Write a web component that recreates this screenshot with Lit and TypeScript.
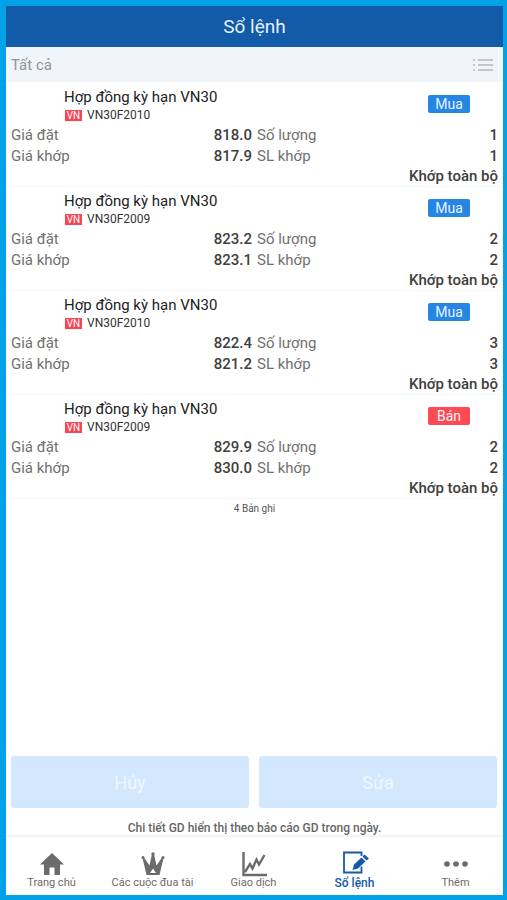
import { LitElement, html, svg, css } from "lit";
import { customElement, property } from "lit/decorators.js";

interface Order {
  code: string;
  side: "Mua" | "Bán";
  price: string;
  matched: string;
  quantity: number;
}

const ORDERS: Order[] = [
  { code: "VN30F2010", side: "Mua", price: "818.0", matched: "817.9", quantity: 1 },
  { code: "VN30F2009", side: "Mua", price: "823.2", matched: "823.1", quantity: 2 },
  { code: "VN30F2010", side: "Mua", price: "822.4", matched: "821.2", quantity: 3 },
  { code: "VN30F2009", side: "Bán", price: "829.9", matched: "830.0", quantity: 2 },
];

const ICONS = {
  home: svg`<path d="M14 3 L26 14.5 H22 V25 H16.5 V17.5 H11.5 V25 H6 V14.5 H2 Z" fill="currentColor"/>`,
  crown: svg`<g fill="currentColor"><circle cx="14" cy="4" r="1.7"/><circle cx="4" cy="7.500" r="1.500"/><circle cx="24" cy="7.500" r="1.500"/><path fill-rule="evenodd" d="M3.500 8 L5 7.500 L10.500 15.500 L13 4 H15 L17.500 15.500 L23 7.500 L24.500 8 L20.500 25 H7.500 Z M14 18.500 L11 23 H17 Z"/></g>`,
  chart: svg`<g fill="none" stroke="currentColor"><path d="M3.500 2 V25 H27" stroke-width="2.400"/><path d="M5 22 L10 14 L12.500 18.500 L16.500 9.500 L19 14.500 L24.500 5" stroke-width="2.400"/></g>`,
  edit: svg`<path d="M20.500 16.500 V22.500 H3 V2.500 H20.500 V6" fill="none" stroke="currentColor" stroke-width="1.800"/><path d="M11.500 20 L13 14.500 L20.500 7.500 L24.500 11.500 L17 18.500 Z M21.500 6.500 L23.500 4.500 L28 8.500 L25.500 10.500 Z" fill="currentColor"/>`,
  more: svg`<g fill="currentColor"><circle cx="5" cy="14" r="2.800"/><circle cx="14" cy="14" r="2.800"/><circle cx="23" cy="14" r="2.800"/></g>`,
};

@customElement("order-row")
class OrderRow extends LitElement {
  @property({ attribute: false }) order!: Order;

  static styles = css`
    :host {
      display: block;
      padding: 4px 5px 0;
      border-bottom: 1px solid #f3f5f7;
    }
    .head {
      display: flex;
      justify-content: space-between;
      height: 38px;
      padding: 0 28px 0 53px;
    }
    .name {
      margin: 0;
      font-size: 15px;
      line-height: 20px;
      font-weight: 400;
      color: #222;
    }
    .code {
      display: flex;
      align-items: center;
      gap: 5px;
      font-size: 12px;
      line-height: 16px;
      padding-left: 1px;
      color: #333;
    }
    .market {
      width: 17px;
      height: 11px;
      background: #fb4352;
      color: #fff;
      font-size: 10px;
      line-height: 11px;
      text-align: center;
    }
    .side {
      width: 42px;
      height: 18px;
      margin-top: 8px;
      border-radius: 2px;
      background: #2586e3;
      color: #e8f3ff;
      font-size: 14px;
      line-height: 18px;
      text-align: center;
    }
    .sell {
      background: #fe4b51;
    }
    .facts {
      display: grid;
      grid-template-columns: 1fr 1fr;
      column-gap: 5px;
      margin: 0;
      font-size: 15px;
      line-height: 21px;
      color: #707070;
    }
    .fact {
      display: flex;
      justify-content: space-between;
    }
    dd {
      margin: 0;
      color: #404040;
      font-weight: 500;
    }
    .status {
      margin: 0;
      font-size: 15px;
      line-height: 19px;
      text-align: right;
      color: #404040;
      font-weight: 500;
    }
  `;

  render() {
    const o = this.order;
    const facts: [string, string | number][] = [
      ["Giá đặt", o.price],
      ["Số lượng", o.quantity],
      ["Giá khớp", o.matched],
      ["SL khớp", o.quantity],
    ];
    return html`
      <div class="head">
        <div>
          <h2 class="name">Hợp đồng kỳ hạn VN30</h2>
          <div class="code"><span class="market">VN</span>${o.code}</div>
        </div>
        <span class="side ${o.side === "Bán" ? "sell" : ""}">${o.side}</span>
      </div>
      <dl class="facts">
        ${facts.map(([k, v]) => html`<div class="fact"><dt>${k}</dt><dd>${v}</dd></div>`)}
      </dl>
      <p class="status">Khớp toàn bộ</p>
    `;
  }
}

@customElement("app-root")
class AppRoot extends LitElement {
  static styles = css`
    :host {
      display: flex;
      flex-direction: column;
      box-sizing: border-box;
      min-height: 100vh;
      border: solid #02a2e9;
      border-width: 6px 4px 5px 6px;
      background: #fff;
      font-family: Roboto, "Liberation Sans", sans-serif;
    }
    .title {
      margin: 0;
      background: #125ba8;
      color: #e6f0fb;
      font-size: 19px;
      font-weight: 400;
      line-height: 41px;
      text-align: center;
    }
    .filter {
      display: flex;
      align-items: center;
      justify-content: space-between;
      height: 35px;
      padding: 0 10px 0 5px;
      background: #f0f5f9;
      color: #909498;
      font-size: 15px;
    }
    button {
      font: inherit;
      border: 0;
      padding: 0;
      background: none;
      color: inherit;
    }
    .list {
      display: block;
      width: 20px;
      height: 14px;
      color: #c3c7ca;
    }
    main {
      padding-top: 1px;
    }
    .count {
      margin: 0;
      padding-top: 2px;
      font-size: 10px;
      line-height: 16px;
      text-align: center;
      color: #555;
    }
    .actions {
      display: grid;
      grid-template-columns: 1fr 1fr;
      gap: 10px;
      margin-top: auto;
      padding: 0 6px 0 5px;
    }
    .action {
      height: 52px;
      border-radius: 3px;
      background: #d3e8fe;
      color: #f1f8ff;
      font-size: 18px;
    }
    .note {
      margin: 0;
      padding-top: 13px;
      font-size: 12px;
      font-weight: 500;
      line-height: 14px;
      text-align: center;
      color: #666;
    }
    .tabs {
      display: grid;
      grid-template-columns: repeat(5, 1fr);
      height: 60px;
      box-sizing: border-box;
      margin: 0 -3px 0 -5px;
    }
    .rule {
      height: 2px;
      margin-bottom: -2px;
      background: #f4f4f4;
    }
    .tab {
      display: flex;
      flex-direction: column;
      align-items: center;
      padding-top: 15px;
      font-size: 11px;
      line-height: 14px;
      color: #6b6b6b;
      text-decoration: none;
      white-space: nowrap;
    }
    .tab svg {
      width: 28px;
      height: 28px;
      margin-bottom: -2px;
    }
    .current {
      color: #1559a8;
      font-size: 12px;
      font-weight: 500;
    }
  `;

  private tab(icon: keyof typeof ICONS, label: string, current = false) {
    return html`<a class="tab ${current ? "current" : ""}" href="#${icon}">
      <svg viewBox="0 0 28 28" aria-hidden="true">${ICONS[icon]}</svg>${label}
    </a>`;
  }

  render() {
    return html`
      <h1 class="title">Sổ lệnh</h1>
      <div class="filter">
        <span>Tất cả</span>
        <button aria-label="Danh sách">
          <svg class="list" viewBox="0 0 20 14" fill="none" stroke="currentColor" stroke-width="2">
            <path d="M0 2 H2 M5 2 H20 M0 7 H2 M5 7 H20 M0 12 H2 M5 12 H20" />
          </svg>
        </button>
      </div>
      <main>
        ${ORDERS.map((o) => html`<order-row .order=${o}></order-row>`)}
        <p class="count">${ORDERS.length} Bản ghi</p>
      </main>
      <div class="actions">
        <button class="action">Hủy</button>
        <button class="action">Sửa</button>
      </div>
      <p class="note">Chi tiết GD hiển thị theo báo cáo GD trong ngày.</p>
      <div class="rule"></div>
      <nav class="tabs">
        ${this.tab("home", "Trang chủ")}
        ${this.tab("crown", "Các cuộc đua tài")}
        ${this.tab("chart", "Giao dịch")}
        ${this.tab("edit", "Sổ lệnh", true)}
        ${this.tab("more", "Thêm")}
      </nav>
    `;
  }
}
